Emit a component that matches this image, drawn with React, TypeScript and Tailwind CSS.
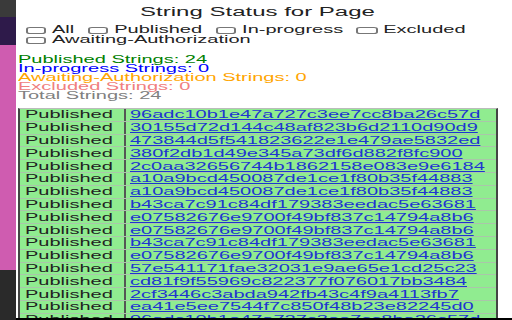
const hashes = [
  "96adc10b1e47a727c3ee7cc8ba26c57d",
  "30155d72d144c48af823b6d2110d90d9",
  "473844d5f541823622e1e479ae5832ed",
  "380f2db1d49e345a73df6d882f8fc900",
  "2c0aa32656744b1862158e083e9e6184",
  "a10a9bcd450087de1ce1f80b35f44883",
  "a10a9bcd450087de1ce1f80b35f44883",
  "b43ca7c91c84df179383eedac5e63681",
  "e07582676e9700f49bf837c14794a8b6",
  "e07582676e9700f49bf837c14794a8b6",
  "b43ca7c91c84df179383eedac5e63681",
  "e07582676e9700f49bf837c14794a8b6",
  "57e541171fae32031e9ae65e1cd25c23",
  "cd81f9f55969c822377f076017bb3484",
  "2cf3446c3abda942fb43c4f9a4113fb7",
  "ea41e5ee7544f7c850f48b23e82245d0",
  "96adc10b1e47a727c3ee7cc8ba26c57d",
  "30155d72d144c48af823b6d2110d90d9",
  "473844d5f541823622e1e479ae5832ed",
  "380f2db1d49e345a73df6d882f8fc900",
  "2c0aa32656744b1862158e083e9e6184",
  "a10a9bcd450087de1ce1f80b35f44883",
  "b43ca7c91c84df179383eedac5e63681",
  "e07582676e9700f49bf837c14794a8b6",
]

const filters = ["All", "Published", "In-progress", "Excluded", "Awaiting-Authorization"]

function Checkbox({ label }: { label: string }) {
  return (
    <label className="mr-[6.5px] flex h-[10px] items-center">
      <span className="mr-[3px] h-[7px] w-[10.5px] rounded-[2px] border-y border-x-[0.5px] border-[#777] bg-white" />
      <span>{label}</span>
    </label>
  )
}

export default function App() {
  return (
    <div className="flex h-[320px] w-[512px] overflow-hidden bg-white font-['Liberation_Sans',Arial,sans-serif] text-[#222]">
      {/* page behind the popup */}
      <div className="flex w-[16px] shrink-0 flex-col">
        <div className="h-[17px] bg-[#3a3a3a]" />
        <div className="h-[28px] bg-[#2e1a4a]" />
        <div className="h-[225px] bg-[#cf5cb0]" />
        <div className="flex-1 bg-[#2a2a2a]" />
      </div>

      <div className="flex min-w-0 flex-1 flex-col">
        <div className="min-h-0 flex-1 overflow-hidden">
          <div className="ml-[2px] w-[239.5px] origin-top-left scale-x-[2]">
            <h1 className="pt-[5px] text-center text-[12px] leading-[14px] font-normal">String Status for Page</h1>

            <div className="mt-[6px] flex flex-wrap pl-[3.5px] text-[10px] leading-[10px]">
              {filters.map((f) => (
                <Checkbox key={f} label={f} />
              ))}
            </div>

            <div className="mt-[10px] text-[10px] leading-[9px]">
              <div className="text-[#008000]">Published Strings: 24</div>
              <div className="text-[#0000ff]">In-progress Strings: 0</div>
              <div className="text-[#ffa500]">Awaiting-Authorization Strings: 0</div>
              <div className="text-[#f08080]">Excluded Strings: 0</div>
              <div className="text-[#808080]">Total Strings: 24</div>
            </div>

            <div className="mt-[8px] border-x border-t border-x-[#444] border-t-[#bbb] bg-[#90ec90] text-[10px]">
              {hashes.map((h, i) => (
                <div key={i} className="flex h-[12.8px] items-center border-b border-[#aac6aa] leading-[11px]">
                  <div className="flex h-full w-[52.5px] shrink-0 items-center border-r border-[#555] pl-[2.5px] text-[#222]">
                    Published
                  </div>
                  <a href="#" className="pl-[2.5px] text-[#1f35d0] underline">
                    {h}
                  </a>
                </div>
              ))}
            </div>
          </div>
        </div>
        <div className="h-[2px] bg-black" />
      </div>
    </div>
  )
}
